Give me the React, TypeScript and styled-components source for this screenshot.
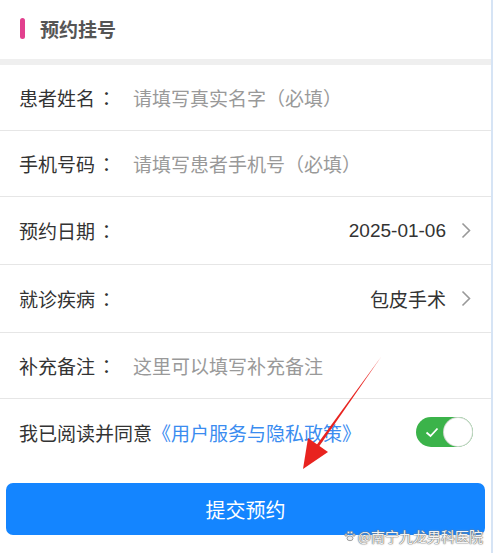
import React from "react";
import styled, { createGlobalStyle } from "styled-components";

const Global = createGlobalStyle`
  html, body { margin: 0; padding: 0; background: #fff; }
  body { font-family: "Liberation Sans", "Noto Sans CJK SC", sans-serif; }
`;

const Page = styled.div`
  position: relative;
  width: 493px;
  height: 553px;
  box-sizing: border-box;
  border-right: 2px solid #d6e4f5;
  background: #fff;
  overflow: hidden;
`;

const Header = styled.div`
  height: 59px;
  display: flex;
  align-items: center;
  padding: 0 0 3px 20px;
  box-sizing: border-box;
  gap: 15px;
`;

const Mark = styled.span`
  width: 5px;
  height: 21px;
  border-radius: 3px;
  background: #e2408e;
`;

const Title = styled.h1`
  margin: 0;
  font-size: 19px;
  font-weight: 700;
  color: #555;
  font-family: "Noto Sans CJK SC", sans-serif;
`;

const Band = styled.div`
  height: 6px;
  background: #efefef;
`;

const Row = styled.div<{ $h: number }>`
  height: ${(p) => p.$h}px;
  box-sizing: border-box;
  border-bottom: 1px solid #e6e6e6;
  display: flex;
  align-items: center;
  padding: 0 20px 0 19px;
  font-family: "Noto Sans CJK SC", sans-serif;
  font-size: 19px;
`;

const Label = styled.span`
  color: #333;
  width: 114px;
  flex-shrink: 0;
`;

const Colon = styled.span`
  font-family: "Noto Sans CJK TC", sans-serif;
  margin-left: 2px;
`;

const Placeholder = styled.span`
  color: #999;
`;

const Value = styled.span`
  margin-left: auto;
  color: #333;
  font-family: "Liberation Sans", "Noto Sans CJK SC", sans-serif;
  font-size: 19px;
`;

const Chevron = styled.svg`
  margin-left: 15px;
  width: 10px;
  height: 17px;
  flex-shrink: 0;
`;

const AgreeRow = styled.div`
  height: 66px;
  display: flex;
  align-items: center;
  padding: 0 18px 0 19px;
  font-family: "Noto Sans CJK SC", sans-serif;
  font-size: 19px;
  color: #333;
`;

const Link = styled.span`
  color: #3a8cf0;
`;

const Toggle = styled.div`
  margin-left: auto;
  width: 57px;
  height: 30px;
  border-radius: 15px;
  background: #3bb34a;
  position: relative;
  display: flex;
  align-items: center;
  padding-left: 9px;
  box-sizing: border-box;
`;

const Knob = styled.span`
  position: absolute;
  right: 1px;
  top: 1px;
  width: 28px;
  height: 28px;
  border-radius: 50%;
  background: #fff;
  box-shadow: 0 0 0 1px #cfd8cf;
`;

const ButtonWrap = styled.div`
  padding: 18px 6px 0 6px;
`;

const Submit = styled.button`
  width: 100%;
  height: 52px;
  border: none;
  border-radius: 7px;
  background: #1485ff;
  color: #fff;
  font-family: "Noto Sans CJK SC", sans-serif;
  font-size: 20px;
  cursor: pointer;
`;

const Arrow = styled.svg`
  position: absolute;
  left: 290px;
  top: 350px;
  width: 100px;
  height: 130px;
  pointer-events: none;
`;

const Watermark = styled.div`
  position: absolute;
  right: 8px;
  top: 526px;
  display: flex;
  align-items: center;
  gap: 2px;
  font-family: "Noto Sans CJK SC", sans-serif;
  font-size: 14px;
  color: #f4f4f4;
  text-shadow: 0 0 1px #666, 0 0 1px #666, 0 0 2px #999;
`;

const Paw = styled.svg`
  width: 12px;
  height: 12px;
`;

const rows = [
  { label: "患者姓名", placeholder: "请填写真实名字（必填）", h: 66 },
  { label: "手机号码", placeholder: "请填写患者手机号（必填）", h: 66 },
  { label: "预约日期", value: "2025-01-06", h: 68 },
  { label: "就诊疾病", value: "包皮手术", h: 68 },
  { label: "补充备注", placeholder: "这里可以填写补充备注", h: 66 },
];

const ChevronIcon = () => (
  <Chevron viewBox="0 0 10 17">
    <path d="M1.5 1.5 L8.5 8.5 L1.5 15.5" fill="none" stroke="#999" strokeWidth="1.6" />
  </Chevron>
);

export default function App() {
  return (
    <>
      <Global />
      <Page>
        <Header>
          <Mark />
          <Title>预约挂号</Title>
        </Header>
        <Band />
        {rows.map((r) => (
          <Row key={r.label} $h={r.h}>
            <Label>
              {r.label}
              <Colon>：</Colon>
            </Label>
            {r.placeholder && <Placeholder>{r.placeholder}</Placeholder>}
            {r.value && (
              <>
                <Value>{r.value}</Value>
                <ChevronIcon />
              </>
            )}
          </Row>
        ))}
        <AgreeRow>
          我已阅读并同意<Link>《用户服务与隐私政策》</Link>
          <Toggle>
            <svg width="14" height="11" viewBox="0 0 14 11">
              <path d="M1.5 5.5 L5.5 9 L12.5 1.5" fill="none" stroke="#fff" strokeWidth="1.8" />
            </svg>
            <Knob />
          </Toggle>
        </AgreeRow>
        <ButtonWrap>
          <Submit>提交预约</Submit>
        </ButtonWrap>
        <Arrow viewBox="0 0 100 130">
          <path d="M91 7 L28 98 L25.5 96.5 Z" fill="#e8231f" />
          <path d="M13 119 L18 88 L38 102 Z" fill="#e8231f" />
        </Arrow>
        <Watermark>
          <Paw viewBox="0 0 12 12">
            <g fill="#eee" stroke="#888" strokeWidth="0.8">
              <ellipse cx="6" cy="8.3" rx="3" ry="2.4" />
              <circle cx="2" cy="5" r="1.2" />
              <circle cx="4.5" cy="2.5" r="1.2" />
              <circle cx="7.5" cy="2.5" r="1.2" />
              <circle cx="10" cy="5" r="1.2" />
            </g>
          </Paw>
          <span>@南宁九龙男科医院</span>
        </Watermark>
      </Page>
    </>
  );
}
